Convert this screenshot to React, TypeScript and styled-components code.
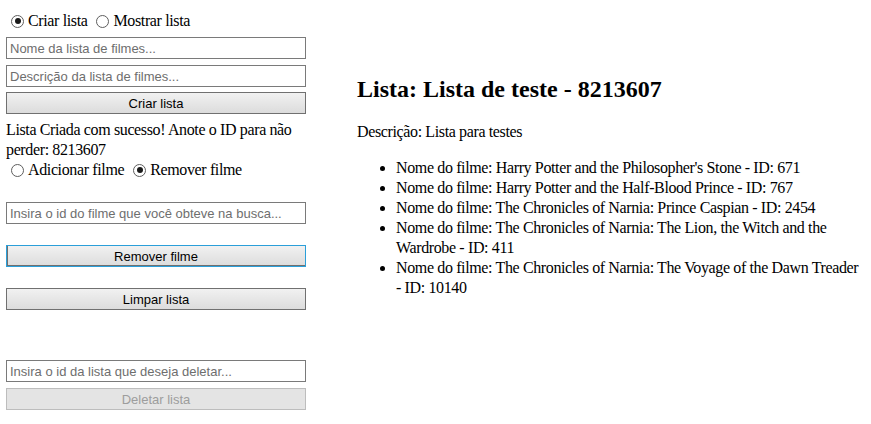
import React from "react";
import styled, { createGlobalStyle } from "styled-components";

const Global = createGlobalStyle`
  html, body { margin: 0; padding: 0; background: #fff; }
  body { font-family: "Liberation Serif", "Times New Roman", serif; font-size: 16px; color: #000; }
`;

const Page = styled.div`
  display: flex;
  align-items: flex-start;
  padding: 0 12px 0 6px;
`;

const LeftCol = styled.div`
  width: 300px;
  flex: none;
  display: flex;
  flex-direction: column;
`;

const RightCol = styled.div`
  flex: 1;
  margin-left: 51px;
  padding-top: 75px;
`;

const RadioRow = styled.div<{ $top: number }>`
  display: flex;
  align-items: center;
  height: 20px;
  line-height: 20px;
  margin-top: ${(p) => p.$top}px;
  padding-left: 5px;
  gap: 9px;
  letter-spacing: -0.37px;
`;

const RadioLabel = styled.label`
  display: flex;
  align-items: center;
  gap: 4px;
  white-space: nowrap;
`;

const Radio = styled.input.attrs({ type: "radio" })`
  appearance: none;
  -webkit-appearance: none;
  width: 13px;
  height: 13px;
  margin: 0;
  border: 1px solid #5e5e5e;
  border-radius: 50%;
  background: #fff;
  position: relative;
  flex: none;
  &:checked::after {
    content: "";
    position: absolute;
    left: 2.5px;
    top: 2.5px;
    width: 6px;
    height: 6px;
    border-radius: 50%;
    background: #1a1a1a;
  }
`;

const TextInput = styled.input<{ $top: number }>`
  box-sizing: border-box;
  width: 300px;
  height: 22px;
  margin: ${(p) => p.$top}px 0 0 0;
  border: 1px solid #7a7a7a;
  padding: 0 3px;
  font-family: "Liberation Sans", Arial, sans-serif;
  font-size: 13px;
  background: #fff;
  outline: none;
  &::placeholder { color: #6e6e6e; }
`;

const Button = styled.button<{ $top: number; $focused?: boolean }>`
  box-sizing: border-box;
  width: 300px;
  height: 22px;
  margin: ${(p) => p.$top}px 0 0 0;
  padding: 0;
  border: 1px solid ${(p) => (p.$focused ? "#2b9fd9" : "#707070")};
  box-shadow: ${(p) => (p.$focused ? "inset 1px -1px 0 #6f6f6f" : "none")};
  background: linear-gradient(#f1f1f1, #dcdcdc);
  font-family: "Liberation Sans", Arial, sans-serif;
  font-size: 13px;
  color: #000;
  &:disabled {
    border-color: #bdbdbd;
    background: #e4e4e4;
    color: #9d9d9d;
  }
`;

const Message = styled.p`
  margin: 6px 0 0 0;
  line-height: 20px;
  letter-spacing: -0.37px;
`;

const Title = styled.h2`
  margin: 0;
  font-size: 24px;
  line-height: 28px;
  font-weight: bold;
`;

const Description = styled.p`
  margin: 19px 0 0 0;
  line-height: 20px;
  letter-spacing: -0.37px;
`;

const MovieList = styled.ul`
  margin: 16px 0 0 0;
  padding-left: 39px;
  line-height: 20px;
  letter-spacing: -0.37px;
`;

const Movie = styled.li``;

const movies = [
  { name: "Harry Potter and the Philosopher's Stone", id: 671 },
  { name: "Harry Potter and the Half-Blood Prince", id: 767 },
  { name: "The Chronicles of Narnia: Prince Caspian", id: 2454 },
  { name: "The Chronicles of Narnia: The Lion, the Witch and the Wardrobe", id: 411 },
  { name: "The Chronicles of Narnia: The Voyage of the Dawn Treader", id: 10140 },
];

export default function App() {
  return (
    <>
      <Global />
      <Page>
        <LeftCol>
          <RadioRow $top={11}>
            <RadioLabel>
              <Radio name="mode" defaultChecked />
              Criar lista
            </RadioLabel>
            <RadioLabel>
              <Radio name="mode" />
              Mostrar lista
            </RadioLabel>
          </RadioRow>
          <TextInput $top={6} placeholder="Nome da lista de filmes..." />
          <TextInput $top={6} placeholder="Descrição da lista de filmes..." />
          <Button $top={5}>Criar lista</Button>
          <Message>Lista Criada com sucesso! Anote o ID para não perder: 8213607</Message>
          <RadioRow $top={0}>
            <RadioLabel>
              <Radio name="action" />
              Adicionar filme
            </RadioLabel>
            <RadioLabel>
              <Radio name="action" defaultChecked />
              Remover filme
            </RadioLabel>
          </RadioRow>
          <TextInput $top={22} placeholder="Insira o id do filme que você obteve na busca..." />
          <Button $top={21} $focused>Remover filme</Button>
          <Button $top={21}>Limpar lista</Button>
          <TextInput $top={50} placeholder="Insira o id da lista que deseja deletar..." />
          <Button $top={6} disabled>Deletar lista</Button>
        </LeftCol>
        <RightCol>
          <Title>Lista: Lista de teste - 8213607</Title>
          <Description>Descrição: Lista para testes</Description>
          <MovieList>
            {movies.map((m) => (
              <Movie key={m.id}>
                Nome do filme: {m.name} - ID: {m.id}
              </Movie>
            ))}
          </MovieList>
        </RightCol>
      </Page>
    </>
  );
}
